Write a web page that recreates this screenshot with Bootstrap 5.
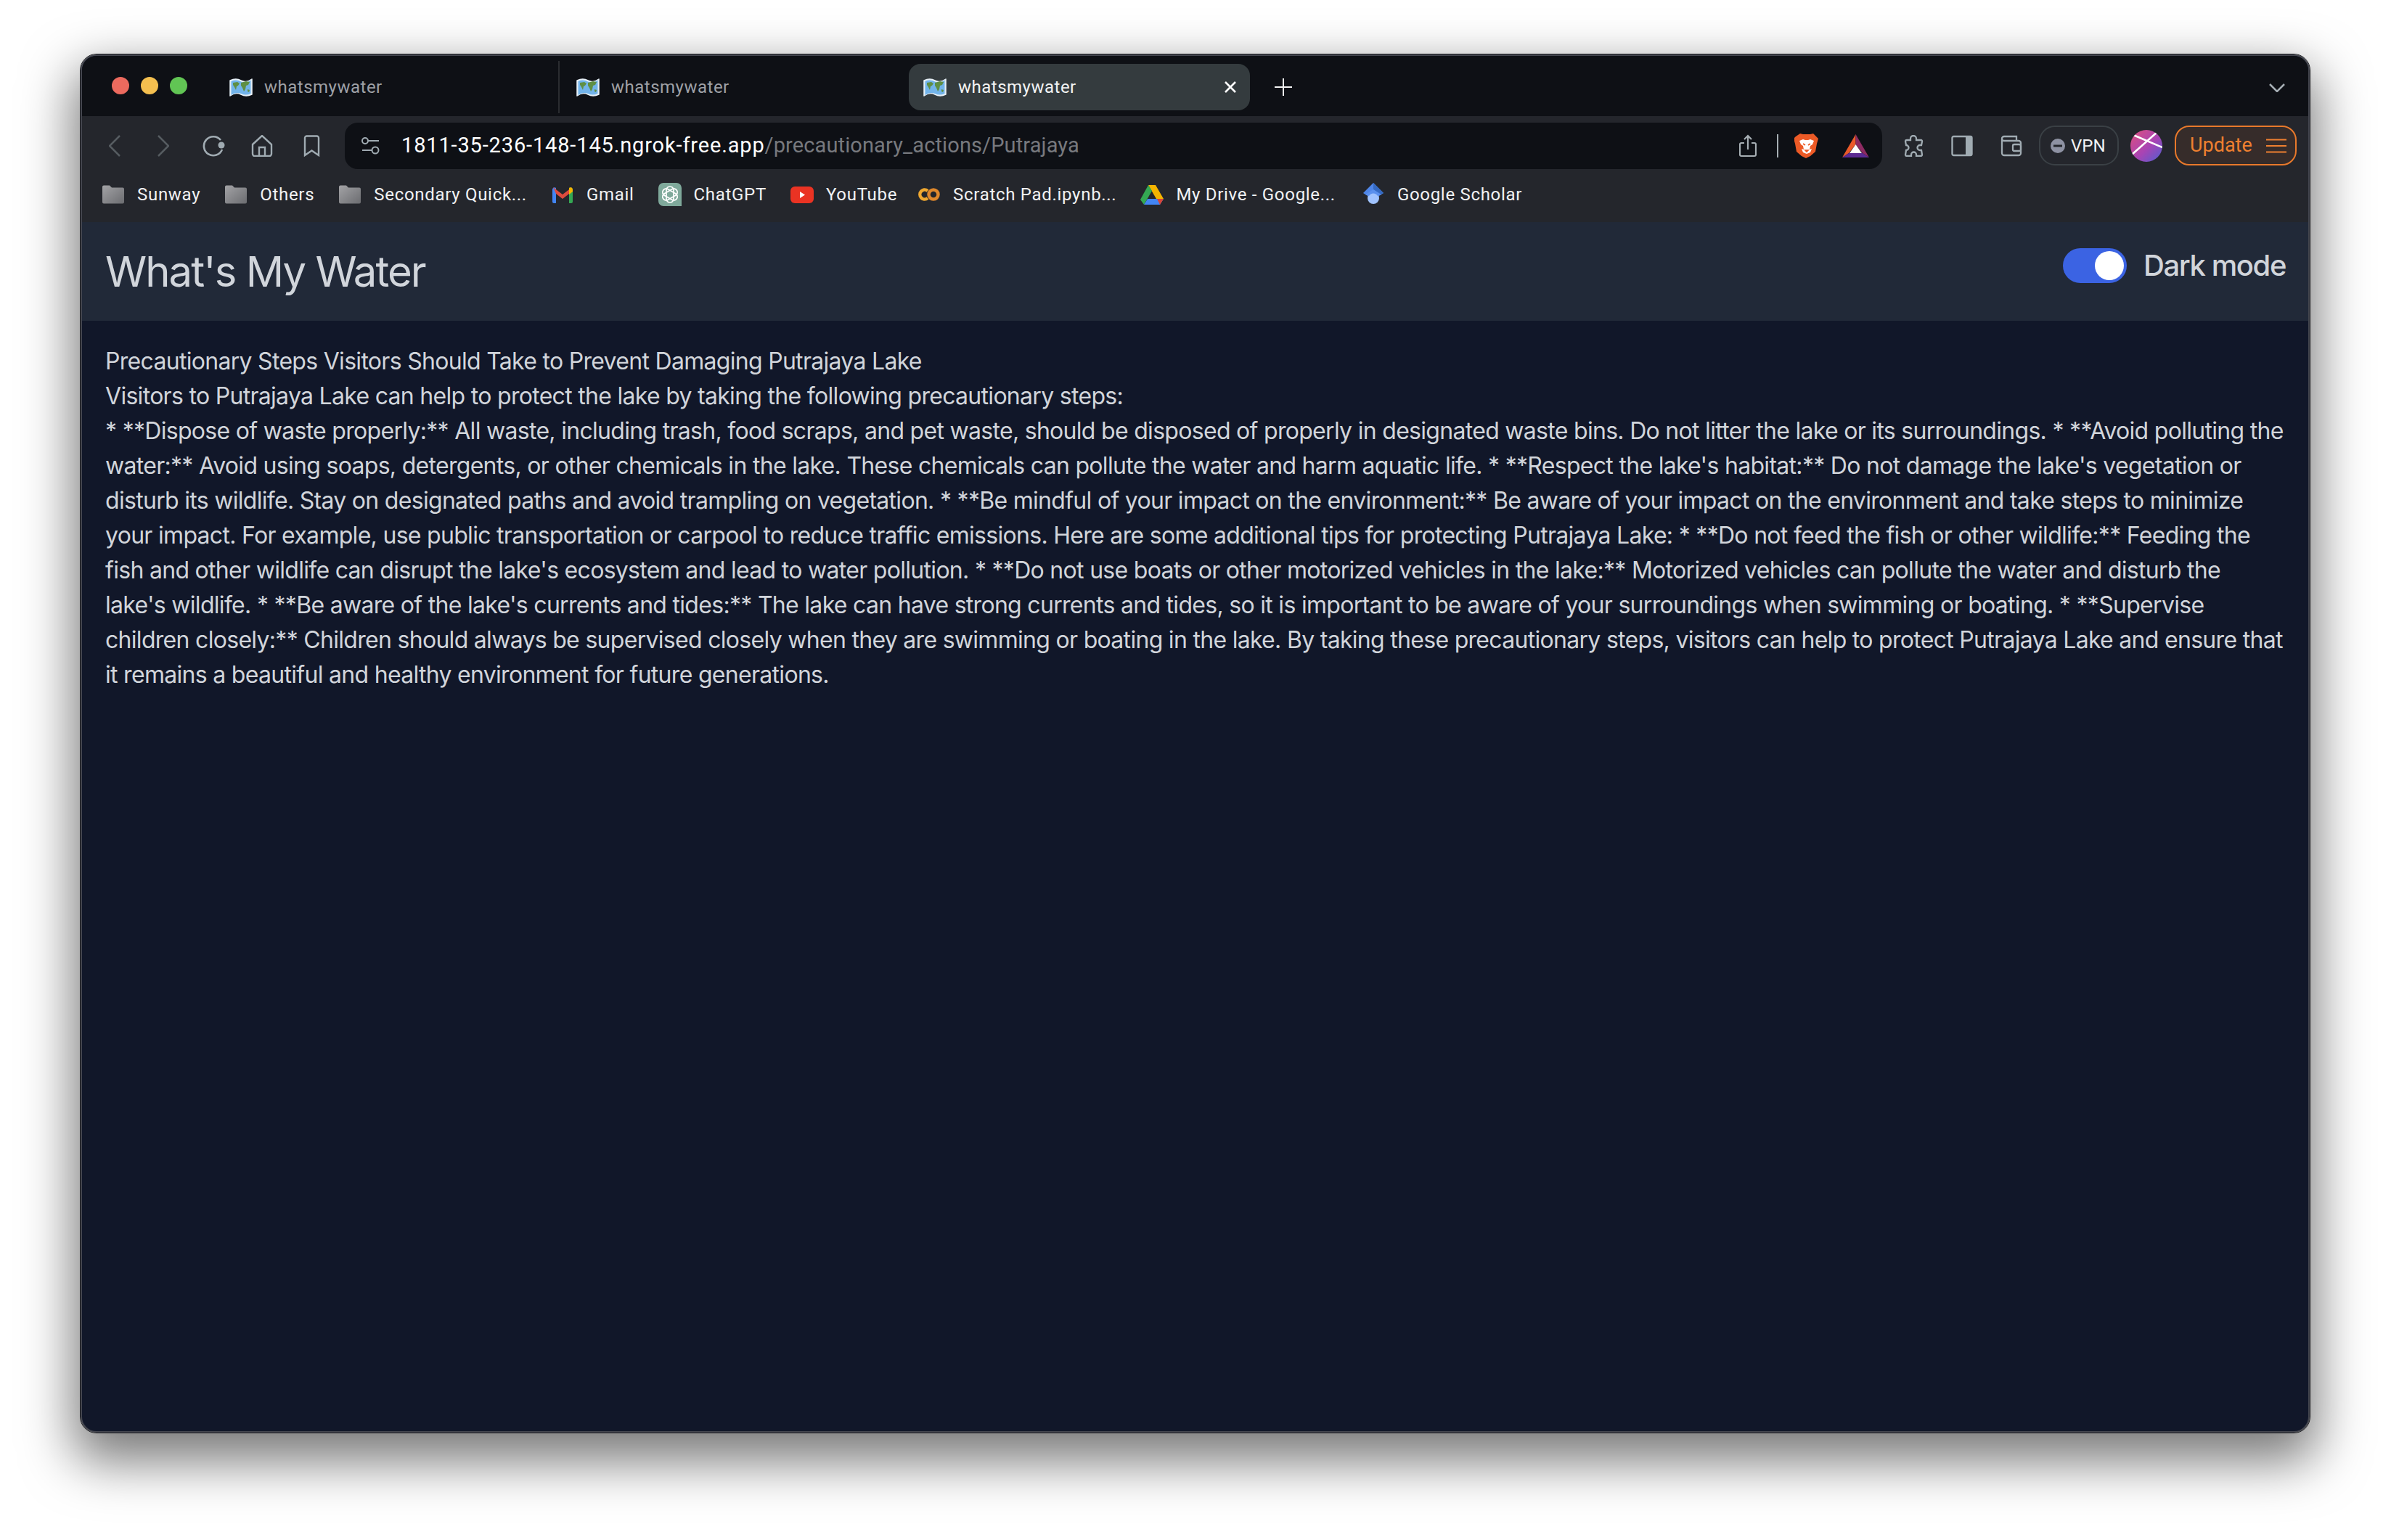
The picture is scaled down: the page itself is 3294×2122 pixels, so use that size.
<!DOCTYPE html>
<html lang="en">
<head>
<meta charset="utf-8">
<title>whatsmywater</title>
<link href="https://cdn.jsdelivr.net/npm/bootstrap@5.3.0/dist/css/bootstrap.min.css" rel="stylesheet">
<style>
html,body{height:100%;}
body{background:#fff;margin:0;padding:75px 112px 0 111px;overflow:hidden;font-family:Inter,"Liberation Sans",sans-serif;}
.mac-window{height:1899px;border-radius:22px;overflow:hidden;background:#111729;border:2px solid #44464f;outline:1px solid #15161a;box-shadow:0 30px 70px 10px rgba(0,0,0,.52);}
.tab-strip{height:83px;background:#0e1015;padding-top:11px;}
.traffic{width:183px;padding-left:41px;height:64px;}
.dot-light{width:24px;height:24px;border-radius:50%;margin-right:16px;margin-top:-4px;}
.dot-red{background:#ec6a5e;}
.dot-amber{background:#f4bf4f;}
.dot-green{background:#61c554;}
.tab-item{width:470px;height:64px;border-radius:16px;padding:0 20px;margin-right:8px;color:#9fa1a6;font-size:24px;font-family:Roboto,Inter,sans-serif;letter-spacing:.5px;}
.tab-item.is-active{background:#343b3e;color:#f2f3f3;}
.tab-icon{width:32px;height:30px;margin-right:16px;flex:none;}
.tab-sep{width:2px;height:72px;background:#2a2c30;margin-left:-5px;margin-right:3px;margin-top:-4px;}
.tab-close{margin-left:auto;margin-right:-2px;width:18px;height:18px;}
.new-tab{width:24px;height:24px;margin-left:26px;margin-top:20px;}
.tab-more{width:22px;height:12px;margin-left:auto;margin-right:32px;margin-top:27px;}
.tool-bar{height:81px;background:#24262c;padding-left:29px;}
.nav-ico{height:30px;flex:none;}
.gap-51{margin-left:51px;}
.gap-45{margin-left:45px;}
.gap-36{margin-left:36px;}
.gap-42{margin-left:42px;}
.gap-28{margin-left:28px;}
.gap-38{margin-left:38px;}
.addr{width:2118px;height:64px;margin-left:34px;background:#0e1015;border-radius:18px;padding:0 18px 0 23px;font-family:Roboto,Inter,sans-serif;font-size:29px;color:#fff;white-space:nowrap;}
.addr-url{margin-left:6px;}
.addr-host{letter-spacing:.85px;}
.addr-path{color:#77797e;letter-spacing:.12px;}
.addr-sep{width:2px;height:32px;background:#a6aeb3;margin:0 22px 0 28px;}
.bat-ico{margin-left:32px;}
.pill-vpn{height:55px;width:110px;margin-left:23px;border:2px solid #3a4045;border-radius:22px;color:#f1f2f3;font-size:24px;font-family:Roboto,Inter,sans-serif;padding-left:14px;}
.avatar-ico{width:44px;height:44px;margin-left:16px;flex:none;}
.pill-update{height:55px;width:168px;margin-left:17px;border:2px solid #e8792b;border-radius:20px;background:#362c2a;color:#ef8030;font-size:27px;font-family:Roboto,Inter,sans-serif;padding:0 12px 0 19px;}
.mark-bar{height:65px;background:#24262c;padding-left:27px;color:#f1f2f3;font-size:24px;font-family:Roboto,Inter,sans-serif;letter-spacing:.7px;padding-bottom:11px;}
.mark-item{margin-right:33px;white-space:nowrap;}
.mark-item.tight-end{margin-right:28px;}
.mark-item.loose-end{margin-right:36px;}
.mark-ico{width:32px;height:32px;margin-right:17px;flex:none;}
.app-head{height:136px;background:#212938;padding:32px 31px 32px 32px;color:#d1d5db;}
.app-title{font-size:58px;line-height:72px;font-weight:400;margin:0;font-family:Inter,sans-serif;letter-spacing:-1.93px;}
.dark-toggle{font-size:40px;line-height:56px;font-weight:500;letter-spacing:-1.4px;}
.dark-toggle .form-check-input{width:88px;height:48px;margin:4px 23px 4px 0;border:0;background-color:#3b63e3;background-image:url("data:image/svg+xml,%3csvg xmlns='http://www.w3.org/2000/svg' viewBox='-24 -20 48 40' preserveAspectRatio='xMaxYMid meet'%3e%3ccircle r='20' fill='%23fff'/%3e%3c/svg%3e");background-size:48px 40px;background-position:right 0 center;float:none;}
.app-body{padding:32px;color:#d1d5db;font-size:32px;line-height:48px;letter-spacing:-.7px;}
</style>
</head>
<body>
<svg width="0" height="0" class="position-absolute">
<defs>
<symbol id="map-ico" viewBox="0 0 32 30">
<path d="M1 6q8-4 15 0t15-2v21q-8 4-15 0T1 27z" fill="#e6eff6" stroke="#e6eff6" stroke-width="1.500" stroke-linejoin="round"/>
<path d="M2.500 7q7-3 13.500 0.500t13.500-2v18.500q-7 3-13.500 0t-13.500 2z" fill="#72b4ea"/>
<path d="M5 9l6-1 3 2-2 3-2 1-1 5-2-4-2-3zM16 9l7-2 5 1-2 4-3 1-1 5-2 3-2-5-2-3zM25 18l3 1-1 3-2-1z" fill="#5f8f45"/>
</symbol>
<symbol id="folder-ico" viewBox="0 0 32 27">
<defs><linearGradient id="fg" x1="0" y1="0" x2="1" y2="1"><stop offset="0" stop-color="#a3a3a6"/><stop offset="1" stop-color="#6b6c70"/></linearGradient></defs>
<path d="M1 3a2 2 0 0 1 2-2h8l3 3h15a2 2 0 0 1 2 2v18a2 2 0 0 1-2 2H3a2 2 0 0 1-2-2z" fill="url(#fg)"/>
</symbol>
</defs>
</svg>
<div class="mac-window d-flex flex-column">
  <div class="tab-strip d-flex align-items-start flex-shrink-0">
    <div class="traffic d-flex align-items-center flex-shrink-0">
      <span class="dot-light dot-red"></span><span class="dot-light dot-amber"></span><span class="dot-light dot-green"></span>
    </div>
    <div class="tab-item d-flex align-items-center"><svg class="tab-icon"><use href="#map-ico"/></svg>whatsmywater</div>
    <span class="tab-sep"></span>
    <div class="tab-item d-flex align-items-center"><svg class="tab-icon"><use href="#map-ico"/></svg>whatsmywater</div>
    <div class="tab-item is-active d-flex align-items-center"><svg class="tab-icon"><use href="#map-ico"/></svg>whatsmywater
      <svg class="tab-close" viewBox="0 0 18 18"><path d="M2 2l14 14M16 2L2 16" stroke="#fff" stroke-width="2.600" fill="none"/></svg>
    </div>
    <svg class="new-tab" viewBox="0 0 24 24"><path d="M12 0v24M0 12h24" stroke="#f2f3f3" stroke-width="2" fill="none"/></svg>
    <svg class="tab-more" viewBox="0 0 22 12"><path d="M1 1l10 10L21 1" stroke="#a5adb3" stroke-width="2.500" fill="none"/></svg>
  </div>

  <div class="tool-bar d-flex align-items-center flex-shrink-0">
    <svg class="nav-ico ms-2" width="16" viewBox="0 0 16 30"><path d="M15 1L1 15l14 14" stroke="#555b60" stroke-width="2.500" fill="none"/></svg>
    <svg class="nav-ico gap-51" width="16" viewBox="0 0 16 30"><path d="M1 1l14 14L1 29" stroke="#555b60" stroke-width="2.500" fill="none"/></svg>
    <svg class="nav-ico gap-45" width="32" viewBox="0 0 32 30"><path d="M26 7A13 13 0 1 0 28 20" stroke="#a0abb2" stroke-width="2.600" fill="none"/><circle cx="27" cy="14" r="4.500" fill="#a0abb2"/></svg>
    <svg class="nav-ico gap-36" width="30" viewBox="0 0 30 30"><path d="M2 13L15 1l13 12v13a3 3 0 0 1-3 3H5a3 3 0 0 1-3-3zM11 29V17h8v12" stroke="#a0abb2" stroke-width="2.400" fill="none"/></svg>
    <svg class="nav-ico gap-42" width="23" viewBox="0 0 23 30"><path d="M2 4a2.500 2.500 0 0 1 2.500-2.500h14A2.500 2.500 0 0 1 21 4v24l-9.500-6.500L2 28z" stroke="#a0abb2" stroke-width="2.400" fill="none"/></svg>
    <div class="addr d-flex align-items-center">
      <svg class="flex-shrink-0 me-4" width="25" height="24" viewBox="0 0 25 24"><circle cx="5" cy="5" r="4" stroke="#a0abb2" stroke-width="2" fill="none"/><path d="M9 5h15M1 18h14" stroke="#a0abb2" stroke-width="2" fill="none"/><circle cx="19" cy="18" r="4.500" stroke="#a0abb2" stroke-width="2" fill="none"/></svg>
      <span class="addr-url"><span class="addr-host">1811-35-236-148-145.ngrok-free.app</span><span class="addr-path">/precautionary_actions/Putrajaya</span></span>
      <svg class="ms-auto flex-shrink-0" width="24" height="32" viewBox="0 0 24 32"><path d="M7 12H3a2 2 0 0 0-2 2v14a2 2 0 0 0 2 2h18a2 2 0 0 0 2-2V14a2 2 0 0 0-2-2h-4M12 21V2M7 7l5-5 5 5" stroke="#a6aeb3" stroke-width="2.200" fill="none"/></svg>
      <span class="addr-sep flex-shrink-0"></span>
      <svg class="flex-shrink-0" width="34" height="36" viewBox="0 0 34 36"><path d="M8 1l4 1h10l4-1 4 4 3 3-2 7-2 11-7 6-6 3-6-3-7-6-2-11-2-7 3-3z" fill="#ec5a26"/><path d="M7 11l5-2 3 1h4l3-1 5 2-2 5-3 2-1 5 3-1-2 5-5 2-5-2-2-5 3 1-1-5-3-2z" fill="#fff"/><path d="M12 15l3 2M22 15l-3 2M15 24h4l-2 2z" stroke="#ec5a26" stroke-width="1.600" fill="#ec5a26"/></svg>
      <svg class="bat-ico flex-shrink-0" width="37" height="32" viewBox="0 0 37 32"><path d="M18.500 0L0 32l9-6 9.500-12z" fill="#ea5a2a"/><path d="M18.500 0L37 32l-9-6-9.500-12z" fill="#8e2b63"/><path d="M0 32l9-6h19l9 6z" fill="#5b2a92"/><path d="M18.500 14L10 26h17z" fill="#fff"/></svg>
    </div>
    <svg class="nav-ico gap-28" width="31" viewBox="0 0 31 30"><path d="M11 5a4 4 0 0 1 8 0v2h7a2 2 0 0 1 1 2l-1 5h-2a3.500 3.500 0 0 0 0 7h2l1 6a2 2 0 0 1-2 2h-6v-2a3.500 3.500 0 0 0-7 0v2H6a2 2 0 0 1-2-2l1-6a3.500 3.500 0 0 0 0-7l-1-5a2 2 0 0 1 2-2h5z" stroke="#a0abb2" stroke-width="2.300" fill="none"/></svg>
    <svg class="nav-ico gap-36" width="30" viewBox="0 0 30 30"><rect x="1.500" y="2" width="27" height="26" rx="2" stroke="#a0abb2" stroke-width="2.400" fill="none"/><rect x="20" y="2" width="9" height="26" fill="#a0abb2"/></svg>
    <svg class="nav-ico gap-38" width="30" viewBox="0 0 30 30"><path d="M2 5a3 3 0 0 1 3-3h17v6M2 5v20a3 3 0 0 0 3 3h20a3 3 0 0 0 3-3V11a3 3 0 0 0-3-3H5a3 3 0 0 1-3-3z" stroke="#a0abb2" stroke-width="2.300" fill="none"/><rect x="17" y="13" width="11" height="9" rx="2" stroke="#a0abb2" stroke-width="2.300" fill="none"/></svg>
    <div class="pill-vpn d-flex align-items-center flex-shrink-0">
      <svg class="me-2" width="20" height="20" viewBox="0 0 20 20"><circle cx="10" cy="10" r="10" fill="#8e92a3"/><rect x="4" y="8.500" width="12" height="3" fill="#24262c"/></svg>VPN
    </div>
    <svg class="avatar-ico" viewBox="0 0 44 44"><defs><linearGradient id="av" x1="0" y1="0" x2="1" y2="1"><stop offset="0" stop-color="#e0507c"/><stop offset=".55" stop-color="#a844b4"/><stop offset="1" stop-color="#4d5fd0"/></linearGradient><clipPath id="avc"><circle cx="22" cy="22" r="22"/></clipPath></defs><circle cx="22" cy="22" r="22" fill="url(#av)"/><g clip-path="url(#avc)"><path d="M4 7l40 17M2 34L38 2" stroke="#fff" stroke-width="2.500" fill="none"/></g></svg>
    <div class="pill-update d-flex align-items-center justify-content-between flex-shrink-0">Update
      <svg width="28" height="20" viewBox="0 0 28 20"><path d="M0 1.500h28M0 10h28M0 18.500h28" stroke="#ef8030" stroke-width="2.200" fill="none"/></svg>
    </div>
  </div>

  <div class="mark-bar d-flex align-items-center flex-shrink-0">
    <div class="mark-item d-flex align-items-center"><svg class="mark-ico"><use href="#folder-ico"/></svg>Sunway</div>
    <div class="mark-item d-flex align-items-center"><svg class="mark-ico"><use href="#folder-ico"/></svg>Others</div>
    <div class="mark-item d-flex align-items-center"><svg class="mark-ico"><use href="#folder-ico"/></svg>Secondary Quick...</div>
    <div class="mark-item d-flex align-items-center"><svg class="mark-ico" viewBox="0 0 32 32"><path d="M2 9a3 3 0 0 1 5-2v21H4a2 2 0 0 1-2-2z" fill="#4285f4"/><path d="M30 9a3 3 0 0 0-5-2v21h3a2 2 0 0 0 2-2z" fill="#34a853"/><path d="M3 6l13 10L29 6l-4 9-9 7-9-7z" fill="#dd4b3e"/><path d="M25 7a3 3 0 0 1 5 2v3l-5 4z" fill="#f4b400"/></svg>Gmail</div>
    <div class="mark-item d-flex align-items-center"><svg class="mark-ico" viewBox="0 0 32 32"><path d="M7 0h18a7 7 0 0 1 7 7v25H7a7 7 0 0 1-7-7V7a7 7 0 0 1 7-7z" fill="#7fa99b"/><g stroke="#fff" stroke-width="1.700" fill="none"><rect x="11" y="5" width="10" height="22" rx="5"/><rect x="11" y="5" width="10" height="22" rx="5" transform="rotate(60 16 16)"/><rect x="11" y="5" width="10" height="22" rx="5" transform="rotate(120 16 16)"/></g></svg>ChatGPT</div>
    <div class="mark-item tight-end d-flex align-items-center"><svg class="mark-ico" viewBox="0 0 32 32"><rect y="5" width="32" height="23" rx="6" fill="#ea3323"/><path d="M13 12l7 4.500-7 4.500z" fill="#fff"/></svg>YouTube</div>
    <div class="mark-item d-flex align-items-center"><svg class="mark-ico" viewBox="0 0 32 32"><path d="M14 11a6.500 6.500 0 1 0 0 10" stroke="#f0a830" stroke-width="4.500" fill="none"/><circle cx="22" cy="16" r="6.500" stroke="#e0882c" stroke-width="4.500" fill="none"/></svg>Scratch Pad.ipynb...</div>
    <div class="mark-item loose-end d-flex align-items-center"><svg class="mark-ico" viewBox="0 0 32 32"><path d="M11 3h10l11 19H22z" fill="#f4b400"/><path d="M11 3L0 23l5 7 11-19z" fill="#34a853"/><path d="M10 22h22l-5 8H5z" fill="#4285f4"/><path d="M23 22h9l-5 8z" fill="#db4437"/></svg>My Drive - Google...</div>
    <div class="mark-item d-flex align-items-center"><svg class="mark-ico" viewBox="0 0 32 32"><path d="M16 0l14 14-14 9-14-9z" fill="#4f86e8"/><path d="M16 0l14 14-6 3-8-8z" fill="#356ac3"/><circle cx="16" cy="21" r="8" fill="#a0c3ff"/><path d="M5 16l11-7 11 7-5 2a7 7 0 0 0-12 0z" fill="#5a90ee"/></svg>Google Scholar</div>
  </div>

  <div class="app-head d-flex justify-content-between align-items-start flex-shrink-0">
    <h1 class="app-title">What's My Water</h1>
    <div class="dark-toggle form-check form-switch d-flex align-items-center p-0 m-0">
      <input class="form-check-input" type="checkbox" role="switch" id="darkMode" checked>
      <label class="form-check-label" for="darkMode">Dark mode</label>
    </div>
  </div>

  <main class="app-body flex-grow-1">
    <div>Precautionary Steps Visitors Should Take to Prevent Damaging Putrajaya Lake</div>
    <div>Visitors to Putrajaya Lake can help to protect the lake by taking the following precautionary steps:</div>
    <div>* **Dispose of waste properly:** All waste, including trash, food scraps, and pet waste, should be disposed of properly in designated waste bins. Do not litter the lake or its surroundings. * **Avoid polluting the water:** Avoid using soaps, detergents, or other chemicals in the lake. These chemicals can pollute the water and harm aquatic life. * **Respect the lake's habitat:** Do not damage the lake's vegetation or disturb its wildlife. Stay on designated paths and avoid trampling on vegetation. * **Be mindful of your impact on the environment:** Be aware of your impact on the environment and take steps to minimize your impact. For example, use public transportation or carpool to reduce traffic emissions. Here are some additional tips for protecting Putrajaya Lake: * **Do not feed the fish or other wildlife:** Feeding the fish and other wildlife can disrupt the lake's ecosystem and lead to water pollution. * **Do not use boats or other motorized vehicles in the lake:** Motorized vehicles can pollute the water and disturb the lake's wildlife. * **Be aware of the lake's currents and tides:** The lake can have strong currents and tides, so it is important to be aware of your surroundings when swimming or boating. * **Supervise children closely:** Children should always be supervised closely when they are swimming or boating in the lake. By taking these precautionary steps, visitors can help to protect Putrajaya Lake and ensure that it remains a beautiful and healthy environment for future generations.</div>
  </main>
</div>
<script src="https://cdn.jsdelivr.net/npm/bootstrap@5.3.0/dist/js/bootstrap.bundle.min.js"></script>
</body>
</html>
